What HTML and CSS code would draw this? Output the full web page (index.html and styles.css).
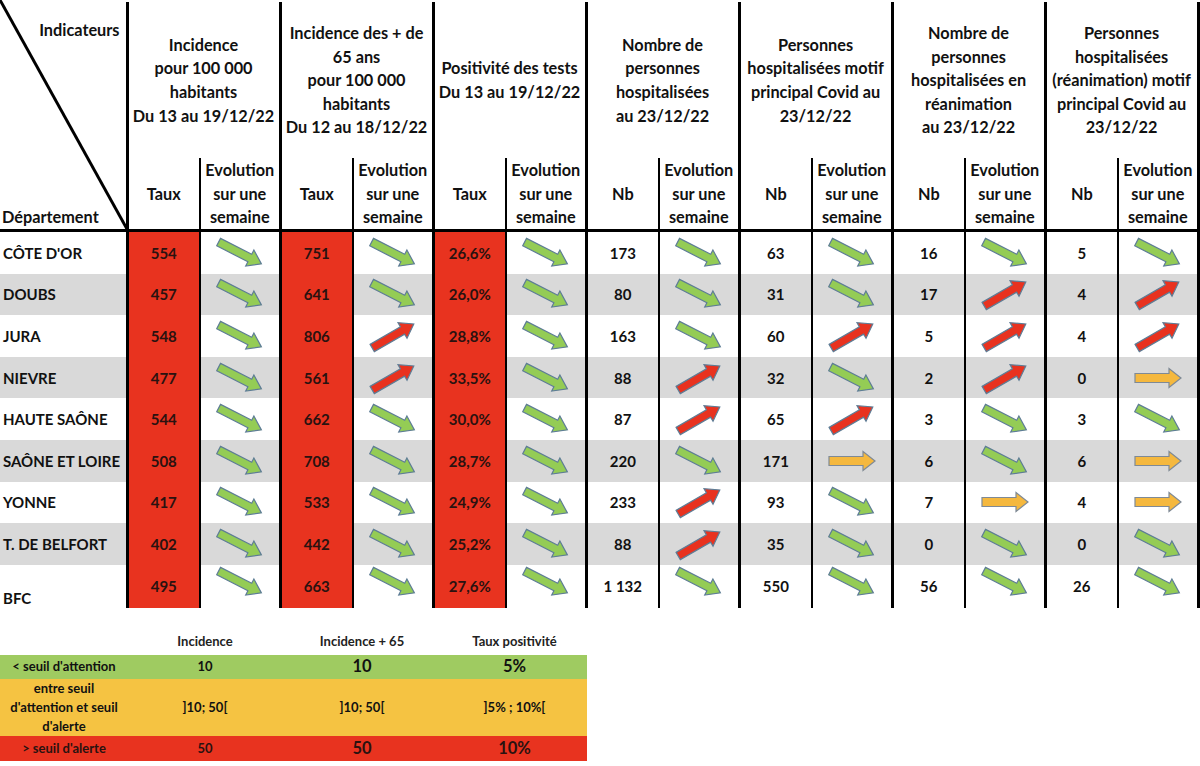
FILE: index.html
```html
<!DOCTYPE html>
<html lang="fr">
<head>
<meta charset="utf-8">
<title>Indicateurs Covid BFC</title>
<link rel="stylesheet" href="styles.css">
</head>
<body>
<svg class="defs" width="0" height="0" aria-hidden="true">
  <symbol id="dn" viewBox="-30 -18 60 36">
    <path transform="rotate(27)" d="M-24,-4.2 H11 V-9 L24,0 L11,9 V4.2 H-24 Z" fill="#94cc55" stroke="#5e7d96" stroke-width="1.2" stroke-linejoin="miter"/>
  </symbol>
  <symbol id="up" viewBox="-30 -18 60 36">
    <path transform="rotate(-30)" d="M-24,-4.2 H11 V-9 L24,0 L11,9 V4.2 H-24 Z" fill="#e8321f" stroke="#5e7d96" stroke-width="1.2"/>
  </symbol>
  <symbol id="rt" viewBox="-30 -18 60 36">
    <path d="M-23,-4.5 H11 V-9.5 L23,0 L11,9.5 V4.5 H-23 Z" fill="#f5b83e" stroke="#7f8a96" stroke-width="1.2"/>
  </symbol>
</svg>

<table class="main">
  <colgroup>
    <col class="c-name">
    <col class="c-v"><col class="c-e">
    <col class="c-v"><col class="c-e">
    <col class="c-v"><col class="c-e">
    <col class="c-v"><col class="c-e">
    <col class="c-v"><col class="c-e">
    <col class="c-v"><col class="c-e">
    <col class="c-v"><col class="c-e">
  </colgroup>
  <thead>
    <tr class="h1">
      <th class="corner" rowspan="2">
        <svg class="diag" viewBox="0 0 127 229" preserveAspectRatio="none"><line x1="0" y1="0" x2="127" y2="229" stroke="#000" stroke-width="3"/></svg>
        <div class="corner-in">
          <span class="ind">Indicateurs</span>
          <span class="dep">Département</span>
        </div>
      </th>
      <th class="grp" colspan="2">Incidence<br>pour 100 000<br>habitants<br>Du 13 au 19/12/22</th>
      <th class="grp" colspan="2">Incidence des + de<br>65 ans<br>pour 100 000<br>habitants<br>Du 12 au 18/12/22</th>
      <th class="grp" colspan="2">Positivité des tests<br>Du 13 au 19/12/22</th>
      <th class="grp" colspan="2">Nombre de<br>personnes<br>hospitalisées<br>au 23/12/22</th>
      <th class="grp" colspan="2">Personnes<br>hospitalisées motif<br>principal Covid au<br>23/12/22</th>
      <th class="grp" colspan="2">Nombre de<br>personnes<br>hospitalisées en<br>réanimation<br>au 23/12/22</th>
      <th class="grp last" colspan="2">Personnes<br>hospitalisées<br>(réanimation) motif<br>principal Covid au<br>23/12/22</th>
    </tr>
    <tr class="h2">
      <th class="v">Taux</th><th class="e">Evolution<br>sur une<br>semaine</th>
      <th class="v">Taux</th><th class="e">Evolution<br>sur une<br>semaine</th>
      <th class="v">Taux</th><th class="e">Evolution<br>sur une<br>semaine</th>
      <th class="v">Nb</th><th class="e">Evolution<br>sur une<br>semaine</th>
      <th class="v">Nb</th><th class="e">Evolution<br>sur une<br>semaine</th>
      <th class="v">Nb</th><th class="e">Evolution<br>sur une<br>semaine</th>
      <th class="v">Nb</th><th class="e last">Evolution<br>sur une<br>semaine</th>
    </tr>
  </thead>
  <tbody>
    <tr class="r">
      <td class="name">CÔTE D'OR</td>
      <td class="v red">554</td><td class="e"><svg class="arr"><use href="#dn"/></svg></td>
      <td class="v red">751</td><td class="e"><svg class="arr"><use href="#dn"/></svg></td>
      <td class="v red">26,6%</td><td class="e"><svg class="arr"><use href="#dn"/></svg></td>
      <td class="v">173</td><td class="e"><svg class="arr"><use href="#dn"/></svg></td>
      <td class="v">63</td><td class="e"><svg class="arr"><use href="#dn"/></svg></td>
      <td class="v">16</td><td class="e"><svg class="arr"><use href="#dn"/></svg></td>
      <td class="v">5</td><td class="e last"><svg class="arr"><use href="#dn"/></svg></td>
    </tr>
    <tr class="r alt">
      <td class="name">DOUBS</td>
      <td class="v red">457</td><td class="e"><svg class="arr"><use href="#dn"/></svg></td>
      <td class="v red">641</td><td class="e"><svg class="arr"><use href="#dn"/></svg></td>
      <td class="v red">26,0%</td><td class="e"><svg class="arr"><use href="#dn"/></svg></td>
      <td class="v">80</td><td class="e"><svg class="arr"><use href="#dn"/></svg></td>
      <td class="v">31</td><td class="e"><svg class="arr"><use href="#dn"/></svg></td>
      <td class="v">17</td><td class="e"><svg class="arr"><use href="#up"/></svg></td>
      <td class="v">4</td><td class="e last"><svg class="arr"><use href="#up"/></svg></td>
    </tr>
    <tr class="r">
      <td class="name">JURA</td>
      <td class="v red">548</td><td class="e"><svg class="arr"><use href="#dn"/></svg></td>
      <td class="v red">806</td><td class="e"><svg class="arr"><use href="#up"/></svg></td>
      <td class="v red">28,8%</td><td class="e"><svg class="arr"><use href="#dn"/></svg></td>
      <td class="v">163</td><td class="e"><svg class="arr"><use href="#dn"/></svg></td>
      <td class="v">60</td><td class="e"><svg class="arr"><use href="#up"/></svg></td>
      <td class="v">5</td><td class="e"><svg class="arr"><use href="#up"/></svg></td>
      <td class="v">4</td><td class="e last"><svg class="arr"><use href="#up"/></svg></td>
    </tr>
    <tr class="r alt">
      <td class="name">NIEVRE</td>
      <td class="v red">477</td><td class="e"><svg class="arr"><use href="#dn"/></svg></td>
      <td class="v red">561</td><td class="e"><svg class="arr"><use href="#up"/></svg></td>
      <td class="v red">33,5%</td><td class="e"><svg class="arr"><use href="#dn"/></svg></td>
      <td class="v">88</td><td class="e"><svg class="arr"><use href="#up"/></svg></td>
      <td class="v">32</td><td class="e"><svg class="arr"><use href="#dn"/></svg></td>
      <td class="v">2</td><td class="e"><svg class="arr"><use href="#up"/></svg></td>
      <td class="v">0</td><td class="e last"><svg class="arr"><use href="#rt"/></svg></td>
    </tr>
    <tr class="r">
      <td class="name">HAUTE SAÔNE</td>
      <td class="v red">544</td><td class="e"><svg class="arr"><use href="#dn"/></svg></td>
      <td class="v red">662</td><td class="e"><svg class="arr"><use href="#dn"/></svg></td>
      <td class="v red">30,0%</td><td class="e"><svg class="arr"><use href="#dn"/></svg></td>
      <td class="v">87</td><td class="e"><svg class="arr"><use href="#up"/></svg></td>
      <td class="v">65</td><td class="e"><svg class="arr"><use href="#up"/></svg></td>
      <td class="v">3</td><td class="e"><svg class="arr"><use href="#dn"/></svg></td>
      <td class="v">3</td><td class="e last"><svg class="arr"><use href="#dn"/></svg></td>
    </tr>
    <tr class="r alt">
      <td class="name">SAÔNE ET LOIRE</td>
      <td class="v red">508</td><td class="e"><svg class="arr"><use href="#dn"/></svg></td>
      <td class="v red">708</td><td class="e"><svg class="arr"><use href="#dn"/></svg></td>
      <td class="v red">28,7%</td><td class="e"><svg class="arr"><use href="#dn"/></svg></td>
      <td class="v">220</td><td class="e"><svg class="arr"><use href="#dn"/></svg></td>
      <td class="v">171</td><td class="e"><svg class="arr"><use href="#rt"/></svg></td>
      <td class="v">6</td><td class="e"><svg class="arr"><use href="#dn"/></svg></td>
      <td class="v">6</td><td class="e last"><svg class="arr"><use href="#rt"/></svg></td>
    </tr>
    <tr class="r">
      <td class="name">YONNE</td>
      <td class="v red">417</td><td class="e"><svg class="arr"><use href="#dn"/></svg></td>
      <td class="v red">533</td><td class="e"><svg class="arr"><use href="#dn"/></svg></td>
      <td class="v red">24,9%</td><td class="e"><svg class="arr"><use href="#dn"/></svg></td>
      <td class="v">233</td><td class="e"><svg class="arr"><use href="#up"/></svg></td>
      <td class="v">93</td><td class="e"><svg class="arr"><use href="#dn"/></svg></td>
      <td class="v">7</td><td class="e"><svg class="arr"><use href="#rt"/></svg></td>
      <td class="v">4</td><td class="e last"><svg class="arr"><use href="#rt"/></svg></td>
    </tr>
    <tr class="r alt">
      <td class="name">T. DE BELFORT</td>
      <td class="v red">402</td><td class="e"><svg class="arr"><use href="#dn"/></svg></td>
      <td class="v red">442</td><td class="e"><svg class="arr"><use href="#dn"/></svg></td>
      <td class="v red">25,2%</td><td class="e"><svg class="arr"><use href="#dn"/></svg></td>
      <td class="v">88</td><td class="e"><svg class="arr"><use href="#up"/></svg></td>
      <td class="v">35</td><td class="e"><svg class="arr"><use href="#dn"/></svg></td>
      <td class="v">0</td><td class="e"><svg class="arr"><use href="#dn"/></svg></td>
      <td class="v">0</td><td class="e last"><svg class="arr"><use href="#dn"/></svg></td>
    </tr>
    <tr class="r total">
      <td class="name">BFC</td>
      <td class="v red">495</td><td class="e"><svg class="arr"><use href="#dn"/></svg></td>
      <td class="v red">663</td><td class="e"><svg class="arr"><use href="#dn"/></svg></td>
      <td class="v red">27,6%</td><td class="e"><svg class="arr"><use href="#dn"/></svg></td>
      <td class="v">1 132</td><td class="e"><svg class="arr"><use href="#dn"/></svg></td>
      <td class="v">550</td><td class="e"><svg class="arr"><use href="#dn"/></svg></td>
      <td class="v">56</td><td class="e"><svg class="arr"><use href="#dn"/></svg></td>
      <td class="v">26</td><td class="e last"><svg class="arr"><use href="#dn"/></svg></td>
    </tr>
  </tbody>
</table>

<table class="legend">
  <colgroup>
    <col class="l1"><col class="l2"><col class="l3"><col class="l4">
  </colgroup>
  <thead>
    <tr>
      <th></th><th>Incidence</th><th>Incidence + 65</th><th>Taux positivité</th>
    </tr>
  </thead>
  <tbody>
    <tr class="lg-green">
      <td>&lt; seuil d'attention</td><td>10</td><td class="big">10</td><td class="big">5%</td>
    </tr>
    <tr class="lg-orange">
      <td>entre seuil<br>d'attention et seuil<br>d'alerte</td><td>]10; 50[</td><td>]10; 50[</td><td>]5% ; 10%[</td>
    </tr>
    <tr class="lg-red">
      <td>&gt; seuil d'alerte</td><td>50</td><td class="big">50</td><td class="big">10%</td>
    </tr>
  </tbody>
</table>
</body>
</html>
```

FILE: styles.css
```css
html, body {
  margin: 0;
  padding: 0;
  background: #ffffff;
}

body {
  font-family: Lato, "Open Sans", "Liberation Sans", sans-serif;
  font-weight: 700;
  color: #111111;
}

.defs {
  position: absolute;
  width: 0;
  height: 0;
  overflow: hidden;
}

/* ---------- main table ---------- */
.main {
  border-collapse: collapse;
  table-layout: fixed;
  width: 1199px;
  margin-top: 2px;
}

.c-name { width: 127px; }
.c-v { width: 73px; }
.c-e { width: 80px; }

.main th,
.main td {
  padding: 0;
  text-align: center;
  vertical-align: middle;
  white-space: nowrap;
}

.main th {
  font-size: 16.3px;
  line-height: 23.6px;
  font-weight: 700;
}

.h1 { height: 156px; }
.h2 { height: 71px; }

.grp {
  border-left: 3px solid #000;
  padding-bottom: 2px;
}

.h2 th {
  border-bottom: 3px solid #000;
}

.main .v {
  border-left: 3px solid #000;
}

.main .e {
  border-left: 2px solid #000;
}

.main .last {
  border-right: 3px solid #000;
}

/* corner cell */
.main th.corner {
  position: relative;
  border-bottom: 3px solid #000;
  text-align: left;
  vertical-align: top;
  height: 227px;
}

.diag {
  position: absolute;
  left: 0;
  top: -2px;
  width: 127px;
  height: 229px;
}

.corner-in {
  display: flex;
  flex-direction: column;
  justify-content: space-between;
  height: 227px;
}

.ind {
  align-self: flex-end;
  padding-right: 6px;
  margin-top: 16px;
  line-height: 24px;
}

.dep {
  align-self: flex-start;
  padding-left: 2px;
  line-height: 24px;
}

/* body rows */
.main td {
  font-size: 15px;
  height: 41.6px;
}

.main td.name {
  text-align: left;
  padding-left: 3px;
}

.alt td {
  background: #d9d9d9;
}

.main td.red {
  background: #e8331f;
  color: #2a1210;
}

.main .total td {
  height: 42px;
}

.main .total td.name {
  vertical-align: bottom;
  padding-bottom: 1px;
}

.arr {
  display: block;
  width: 60px;
  height: 36px;
  margin: 0 auto;
}

.total .arr {
  margin-top: -9px;
}

/* ---------- legend ---------- */
.legend {
  border-collapse: collapse;
  table-layout: fixed;
  width: 587px;
  margin-top: 20px;
}

.l1 { width: 128px; }
.l2 { width: 154px; }
.l3 { width: 160px; }
.l4 { width: 145px; }

.legend th,
.legend td {
  padding: 0;
  text-align: center;
  vertical-align: middle;
  font-size: 13px;
  font-weight: 700;
  white-space: nowrap;
}

.legend thead th {
  height: 27px;
  color: #222;
}

.legend td {
  height: 24px;
  line-height: 19px;
}

.legend td.big {
  font-size: 16.5px;
}

.lg-green td { background: #9fcb61; }
.lg-orange td { background: #f5c342; height: 56px; }
.lg-red td { background: #e8331f; height: 25px; color: #2a1210; }
```
